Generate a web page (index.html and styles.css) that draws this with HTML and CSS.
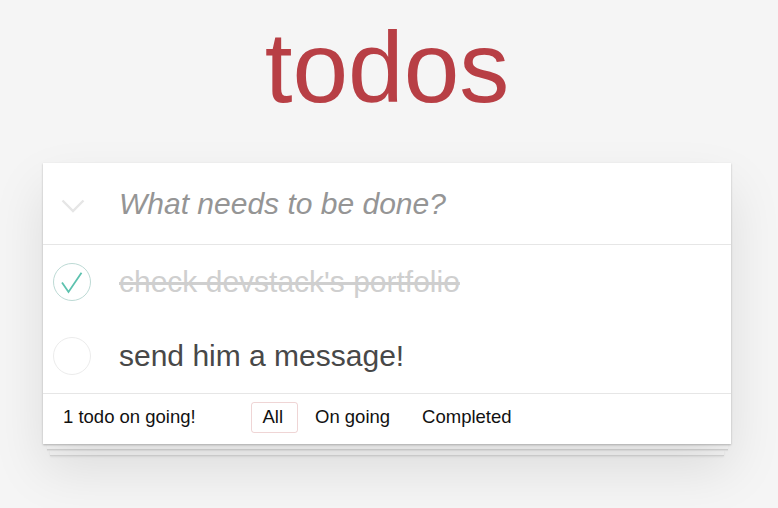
FILE: index.html
```html
<!DOCTYPE html>
<html lang="en">
<head>
<meta charset="utf-8">
<title>todos</title>
<link rel="stylesheet" href="styles.css">
</head>
<body>
<div class="page">
  <h1 class="title">todos</h1>
  <section class="card">
    <header class="new-row">
      <span class="toggle-all">
        <svg width="40" height="20" viewBox="0 0 40 20"><polyline points="10.5,6.5 21,17 31.5,6.5" fill="none" stroke="#e6e6e6" stroke-width="2.4"/></svg>
      </span>
      <span class="placeholder">What needs to be done?</span>
    </header>
    <ul class="list">
      <li class="item done">
        <span class="check">
          <svg width="40" height="40" viewBox="0 0 40 40"><circle cx="20" cy="20" r="18.5" fill="none" stroke="#bddad5" stroke-width="1"/><polyline points="10,20.5 16.5,30 29.5,10.8" fill="none" stroke="#5dc2af" stroke-width="1.8"/></svg>
        </span>
        <span class="label">check devstack's portfolio</span>
      </li>
      <li class="item">
        <span class="check">
          <svg width="40" height="40" viewBox="0 0 40 40"><circle cx="20" cy="20" r="18.5" fill="none" stroke="#ececec" stroke-width="1"/></svg>
        </span>
        <span class="label">send him a message!</span>
      </li>
    </ul>
    <footer class="footer">
      <span class="count">1 todo on going!</span>
      <ul class="filters">
        <li class="filter selected">All</li>
        <li class="filter">On going</li>
        <li class="filter">Completed</li>
      </ul>
      <span class="spacer"></span>
    </footer>
  </section>
  <div class="sheet sheet-one"></div>
  <div class="sheet sheet-two"></div>
</div>
</body>
</html>
```

FILE: styles.css
```css
* { box-sizing: border-box; }

html, body {
  margin: 0;
  padding: 0;
}

body {
  min-height: 100vh;
  background: #f5f5f5;
  font-family: "Liberation Sans", Arial, sans-serif;
  color: #4d4d4d;
  padding-right: 4px;
}

.page {
  width: 688px;
  margin: 0 auto;
}

.title {
  margin: 17px 0 0;
  font-size: 100px;
  line-height: 100px;
  font-weight: normal;
  text-align: center;
  color: #b83f45;
}

.card {
  position: relative;
  z-index: 2;
  margin-top: 46px;
  background: #fff;
  box-shadow: 0 1px 2px rgba(0, 0, 0, 0.25), 0 25px 50px rgba(0, 0, 0, 0.1);
}

.new-row {
  height: 82px;
  border-bottom: 1px solid #e6e6e6;
  display: flex;
  align-items: center;
  padding-left: 9px;
  gap: 27px;
}

.toggle-all {
  width: 40px;
  height: 20px;
  display: flex;
}

.placeholder {
  font-size: 30px;
  line-height: 36px;
  font-style: italic;
  color: #959595;
}

.list {
  list-style: none;
  margin: 0;
  padding: 0;
}

.item {
  height: 74px;
  display: flex;
  align-items: center;
  padding-left: 9px;
  gap: 27px;
}

.check {
  width: 40px;
  height: 40px;
  display: flex;
}

.label {
  font-size: 30px;
  line-height: 36px;
  color: #484848;
}

.item.done .label {
  color: #cfcfcf;
  text-decoration: line-through;
}

.footer {
  height: 51px;
  border-top: 1px solid #e6e6e6;
  padding: 0 16px 4px 20px;
  display: grid;
  grid-template-columns: 1fr auto 1fr;
  align-items: center;
  font-size: 18.5px;
  color: #111;
}

.filters {
  list-style: none;
  margin: 0;
  padding: 0;
  display: flex;
  gap: 6px;
}

.filter {
  padding: 4px 14px 5px 10px;
  border: 1px solid transparent;
  border-radius: 3px;
  line-height: 20px;
}

.filter.selected {
  border-color: rgba(175, 47, 47, 0.2);
}

.sheet {
  position: relative;
  background: #f6f6f6;
}

.sheet-one {
  z-index: 1;
  height: 6px;
  margin: 0 3px 0 4px;
  border-bottom: 1px solid #d6d6d6;
  box-shadow: 0 1px 1px rgba(0, 0, 0, 0.06);
}

.sheet-two {
  z-index: 0;
  height: 6px;
  margin: 0 7px;
  border-bottom: 1px solid #d9d9d9;
  box-shadow: 0 1px 2px rgba(0, 0, 0, 0.08);
}
```
